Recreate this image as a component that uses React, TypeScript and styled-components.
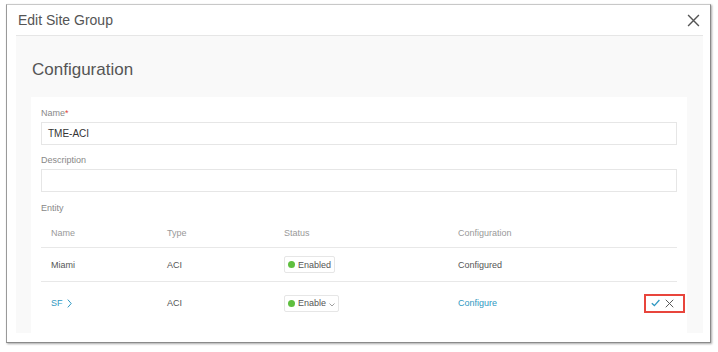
import styled, { createGlobalStyle } from 'styled-components';

const GlobalStyle = createGlobalStyle`
  html, body {
    margin: 0;
    padding: 0;
    background: #ffffff;
  }
  body {
    font-family: "Liberation Sans", Arial, sans-serif;
    color: #333;
  }
`;

const Page = styled.div`
  width: 718px;
  height: 352px;
  padding: 4px 0 0 6px;
  box-sizing: border-box;
`;

const Modal = styled.div`
  width: 705px;
  height: 339px;
  box-sizing: border-box;
  background: #fff;
  border: 1px solid #c8c8c8;
  border-left-color: #9a9a9a;
  border-right-color: #8a8a8a;
  border-bottom-color: #8a8a8a;
  box-shadow: 1px 1px 2px rgba(0, 0, 0, 0.35);
  display: flex;
  flex-direction: column;
  overflow: hidden;
`;

const Header = styled.div`
  flex-shrink: 0;
  height: 30px;
  display: flex;
  align-items: center;
  justify-content: space-between;
  padding: 0 10px 0 11px;
`;

const Title = styled.div`
  font-size: 14px;
  color: #555;
`;

const CloseButton = styled.button`
  border: none;
  background: none;
  padding: 0;
  width: 13px;
  height: 13px;
  display: flex;
  cursor: pointer;
`;

const Body = styled.div`
  margin: 0 7px 9px 9px;
  flex: 1;
  min-height: 0;
  background: #f9f9f9;
  border-top: 1px solid #e6e6e6;
  padding: 0 16px 0 15px;
  display: flex;
  flex-direction: column;
`;

const Heading = styled.h2`
  margin: 0;
  padding: 24px 0 0 1px;
  line-height: 20px;
  font-size: 17px;
  font-weight: normal;
  color: #555;
`;

const Card = styled.div`
  margin-top: 17px;
  flex: 1;
  background: #fff;
  padding: 10px 10px 0 10px;
`;

const FieldLabel = styled.div`
  font-size: 9px;
  color: #888;
  height: 12px;
  line-height: 12px;
  margin-bottom: 3px;
`;

const Required = styled.span`
  color: #e0413a;
`;

const Input = styled.div`
  height: 21px;
  border: 1px solid #e6e6e6;
  display: flex;
  align-items: center;
  padding-left: 6px;
  font-size: 10px;
  color: #333;
  margin-bottom: 9px;
`;

const EntityLabel = styled(FieldLabel)`
  margin-top: 10px;
  margin-bottom: 5px;
`;

const Table = styled.div`
  display: flex;
  flex-direction: column;
`;

const Row = styled.div<{ $height: number; $line?: boolean }>`
  display: grid;
  grid-template-columns: 116px 117px 174px 1fr;
  align-items: center;
  height: ${({ $height }) => $height}px;
  border-bottom: ${({ $line }) => ($line ? '1px solid #e8e8e8' : 'none')};
`;

const Cell = styled.div<{ $head?: boolean; $link?: boolean }>`
  padding-left: 10px;
  font-size: 9px;
  color: ${({ $head, $link }) => ($link ? '#2f98c2' : $head ? '#999' : '#555')};
  display: flex;
  align-items: center;
  gap: 4px;
`;

const ActionCell = styled(Cell)`
  justify-content: space-between;
  margin-right: -8px;
`;

const StatusPill = styled.div`
  display: inline-flex;
  align-items: center;
  gap: 3px;
  height: 15px;
  padding: 0 3px 0 3px;
  border: 1px solid #e6e6e6;
  border-radius: 2px;
  font-size: 9px;
  color: #555;
`;

const Dot = styled.span`
  width: 7px;
  height: 7px;
  border-radius: 50%;
  background: #5fbf3f;
`;

const ActionBox = styled.div`
  display: flex;
  align-items: center;
  gap: 5px;
  width: 41px;
  height: 19px;
  box-sizing: border-box;
  border: 2px solid #e8453c;
  padding-left: 5px;
`;

const Chevron = () => (
  <svg width="5" height="9" viewBox="0 0 5 9">
    <path d="M0.8 0.6 L4.2 4.5 L0.8 8.4" fill="none" stroke="#2f98c2" strokeWidth="1" />
  </svg>
);

const Caret = () => (
  <svg width="6" height="4" viewBox="0 0 6 4" style={{ marginTop: 3 }}>
    <path d="M0.5 0.5 L3 3 L5.5 0.5" fill="none" stroke="#888" strokeWidth="0.8" />
  </svg>
);

const Cross = ({ size, color }: { size: number; color: string }) => (
  <svg width={size} height={size} viewBox="0 0 12 12">
    <path d="M1 1 L11 11 M11 1 L1 11" stroke={color} strokeWidth="1.3" />
  </svg>
);

const Check = () => (
  <svg width="9" height="8" viewBox="0 0 9 8">
    <path d="M0.8 4.2 L3.4 6.6 L8.4 1" fill="none" stroke="#2f98c2" strokeWidth="1.3" />
  </svg>
);

export default function App() {
  return (
    <>
      <GlobalStyle />
      <Page>
        <Modal>
          <Header>
            <Title>Edit Site Group</Title>
            <CloseButton aria-label="Close">
              <Cross size={13} color="#555" />
            </CloseButton>
          </Header>
          <Body>
            <Heading>Configuration</Heading>
            <Card>
              <FieldLabel>
                Name<Required>*</Required>
              </FieldLabel>
              <Input>TME-ACI</Input>
              <FieldLabel>Description</FieldLabel>
              <Input />
              <EntityLabel>Entity</EntityLabel>
              <Table>
                <Row $height={28} $line>
                  <Cell $head>Name</Cell>
                  <Cell $head>Type</Cell>
                  <Cell $head>Status</Cell>
                  <Cell $head>Configuration</Cell>
                </Row>
                <Row $height={33} $line>
                  <Cell>Miami</Cell>
                  <Cell>ACI</Cell>
                  <Cell>
                    <StatusPill>
                      <Dot />
                      Enabled
                    </StatusPill>
                  </Cell>
                  <Cell>Configured</Cell>
                </Row>
                <Row $height={42}>
                  <Cell $link>
                    SF <Chevron />
                  </Cell>
                  <Cell>ACI</Cell>
                  <Cell>
                    <StatusPill>
                      <Dot />
                      Enable <Caret />
                    </StatusPill>
                  </Cell>
                  <ActionCell $link>
                    Configure
                    <ActionBox>
                      <Check />
                      <Cross size={9} color="#555" />
                    </ActionBox>
                  </ActionCell>
                </Row>
              </Table>
            </Card>
          </Body>
        </Modal>
      </Page>
    </>
  );
}
